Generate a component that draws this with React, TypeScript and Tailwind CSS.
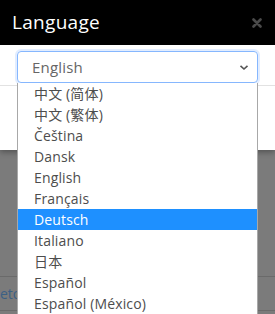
import React from "react";

const languages = [
  "中文 (简体)",
  "中文 (繁体)",
  "Čeština",
  "Dansk",
  "English",
  "Français",
  "Deutsch",
  "Italiano",
  "日本",
  "Español",
  "Español (México)",
];

const font = { fontFamily: '"Open Sans", "Noto Sans CJK SC", sans-serif' };

const App = () => {
  return (
    <div
      className="relative w-[275px] h-[314px] overflow-hidden bg-[#7b7b7b] flex flex-col"
      style={font}
    >
      {/* Modal */}
      <div className="bg-white shadow-[0_2px_6px_rgba(0,0,0,0.35)] z-10">
        <div className="h-[45px] bg-black flex items-center justify-between pl-[12px] pr-[13px]">
          <span className="text-white text-[19px] font-medium tracking-[0.3px]">Language</span>
          <svg width="10" height="10" viewBox="0 0 10 10">
            <path d="M1.5 1.5 L8.5 8.5 M8.5 1.5 L1.5 8.5" stroke="#4a4a4a" strokeWidth="2.6" strokeLinecap="round" />
          </svg>
        </div>
        <div className="px-[17px] pt-[6px] pb-[2px]">
          <div className="h-[32px] rounded-[4px] border border-[#86b7fe] shadow-[0_0_0_2px_rgba(13,110,253,0.12)] flex items-center justify-between pl-[14px] pr-[8px]">
            <span className="text-[15px] text-[#666] tracking-[0.2px]">English</span>
            <svg width="10" height="7" viewBox="0 0 10 7">
              <path d="M1.5 1.8 L5 5 L8.5 1.8" fill="none" stroke="#555" strokeWidth="1.6" />
            </svg>
          </div>
        </div>
        <div className="border-t border-[#e2e2e2] h-[65px] flex items-center justify-end pr-[17px]">
          <div className="w-[90px] h-[28px] rounded-[4px] bg-[#2f7db6] mt-[4px]" />
        </div>
      </div>

      {/* Backdrop page */}
      <div className="flex-1 flex flex-col justify-end">
        <div className="border-t border-[#6a6a6a] h-[34px] flex items-center">
          <span className="text-[14px] text-[#3b6085]">eto</span>
        </div>
        <div className="border-t border-[#6a6a6a] h-[4px]" />
      </div>

      {/* Open dropdown list */}
      <ul className="absolute left-[17px] top-[83px] w-[241px] bg-white border-x border-[#a8a8a8] z-20">
        {languages.map((lang) => (
          <li
            key={lang}
            className={
              lang === "Deutsch"
                ? "h-[21px] pl-[16px] flex items-center text-[14px] tracking-[0.15px] text-white bg-[#1e90ff]"
                : "h-[21px] pl-[16px] flex items-center text-[14px] tracking-[0.15px] text-[#4d4d4d]"
            }
          >
            {lang}
          </li>
        ))}
      </ul>
    </div>
  );
};

export default App;
